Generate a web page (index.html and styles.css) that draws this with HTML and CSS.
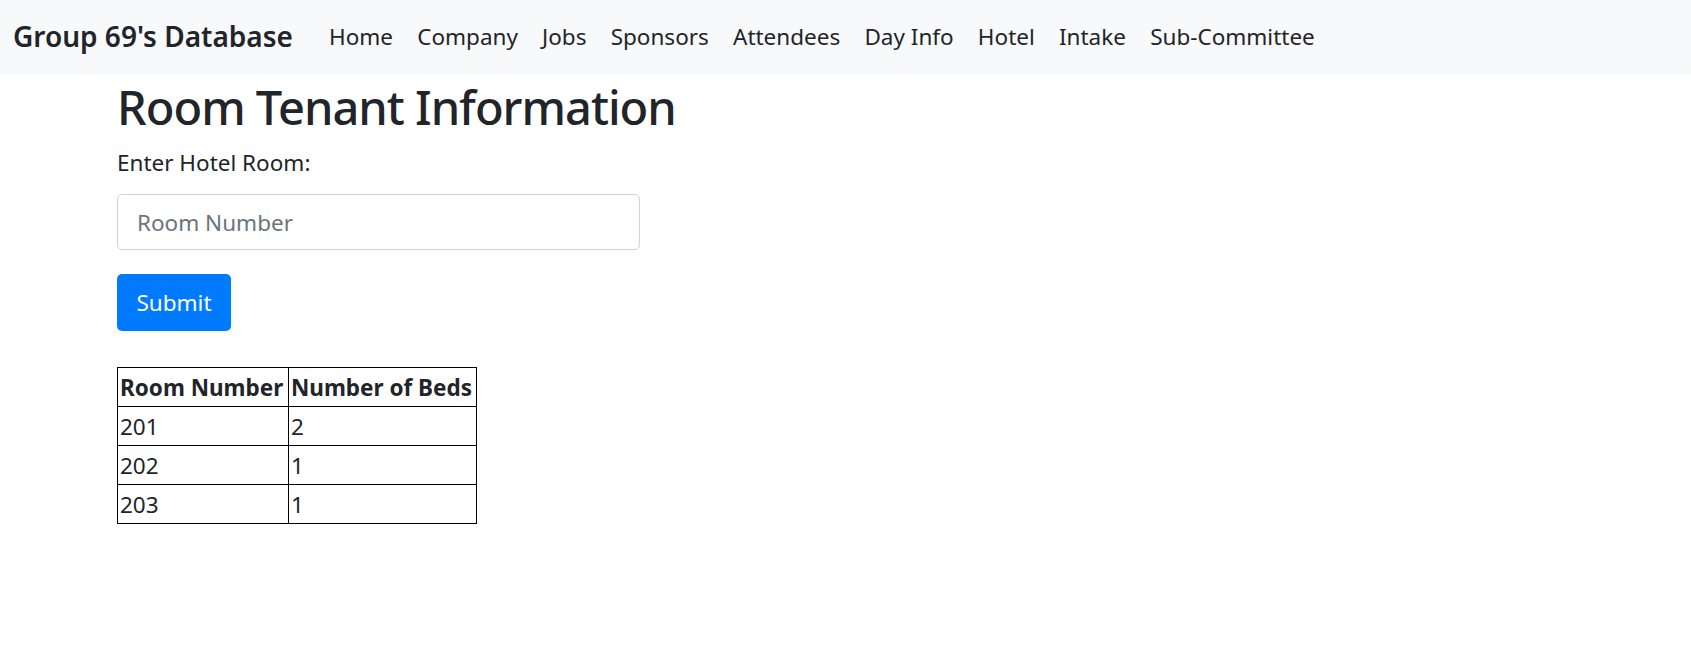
FILE: index.html
```html
<!DOCTYPE html>
<html lang="en">
<head>
<meta charset="utf-8">
<title>Room Tenant Information</title>
<link rel="stylesheet" href="styles.css">
</head>
<body>
<nav class="navbar">
  <a class="brand" href="#">Group 69's Database</a>
  <ul class="nav-list">
    <li><a class="nav-link" href="#">Home</a></li>
    <li><a class="nav-link" href="#">Company</a></li>
    <li><a class="nav-link" href="#">Jobs</a></li>
    <li><a class="nav-link" href="#">Sponsors</a></li>
    <li><a class="nav-link" href="#">Attendees</a></li>
    <li><a class="nav-link" href="#">Day Info</a></li>
    <li><a class="nav-link" href="#">Hotel</a></li>
    <li><a class="nav-link" href="#">Intake</a></li>
    <li><a class="nav-link" href="#">Sub-Committee</a></li>
  </ul>
</nav>
<main class="content">
  <h1 class="title">Room Tenant Information</h1>
  <form class="room-form">
    <label class="form-label" for="room">Enter Hotel Room:</label>
    <input class="form-input" id="room" type="text" placeholder="Room Number">
    <button class="btn-submit" type="button">Submit</button>
  </form>
  <table class="rooms">
    <thead>
      <tr><th class="col-room">Room Number</th><th class="col-beds">Number of Beds</th></tr>
    </thead>
    <tbody>
      <tr><td>201</td><td>2</td></tr>
      <tr><td>202</td><td>1</td></tr>
      <tr><td>203</td><td>1</td></tr>
    </tbody>
  </table>
</main>
</body>
</html>
```

FILE: styles.css
```css
* { box-sizing: border-box; }

body {
  margin: 0;
  font-family: "Noto Sans", "Open Sans", sans-serif;
  font-size: 22.5px;
  color: #212529;
  background: #fff;
}

.navbar {
  height: 75px;
  background: #f8f9fa;
  display: flex;
  align-items: center;
  padding-left: 13px;
  padding-bottom: 3px;
}

.brand {
  font-size: 28px;
  font-weight: 600;
  color: #212529;
  text-decoration: none;
  margin-right: 24px;
  line-height: 1;
}

.nav-list {
  list-style: none;
  margin: 0;
  padding: 0;
  display: flex;
}

.nav-link {
  display: block;
  padding: 0 12.1px;
  color: #212529;
  text-decoration: none;
  font-size: 22.5px;
}

.content {
  padding-left: 117px;
}

.title {
  margin: 0;
  font-size: 47px;
  letter-spacing: -1px;
  font-weight: 500;
  line-height: 65px;
}

.room-form {
  display: flex;
  flex-direction: column;
  align-items: flex-start;
}

.form-label {
  margin-top: 7px;
  line-height: 32px;
}

.form-input {
  margin-top: 15px;
  width: 523px;
  height: 56px;
  border: 1.5px solid #ced4da;
  border-radius: 5px;
  padding: 0 19px;
  font-family: inherit;
  font-size: 22.5px;
  color: #495057;
}

.form-input::placeholder { color: #6c757d; }

.btn-submit {
  margin-top: 24px;
  width: 114px;
  height: 57px;
  border: none;
  border-radius: 5px;
  background: #007bff;
  color: #fff;
  font-family: inherit;
  font-size: 22.5px;
  padding: 0;
}

.rooms {
  margin-top: 36px;
  border-collapse: collapse;
  table-layout: fixed;
}

.rooms th,
.rooms td {
  border: 1px solid #000;
  height: 39px;
  padding: 0 2px;
  text-align: left;
  vertical-align: middle;
  font-size: 22.5px;
}

.rooms th { font-weight: 700; }

.col-room { width: 171px; }
.col-beds { width: 188px; }
```
